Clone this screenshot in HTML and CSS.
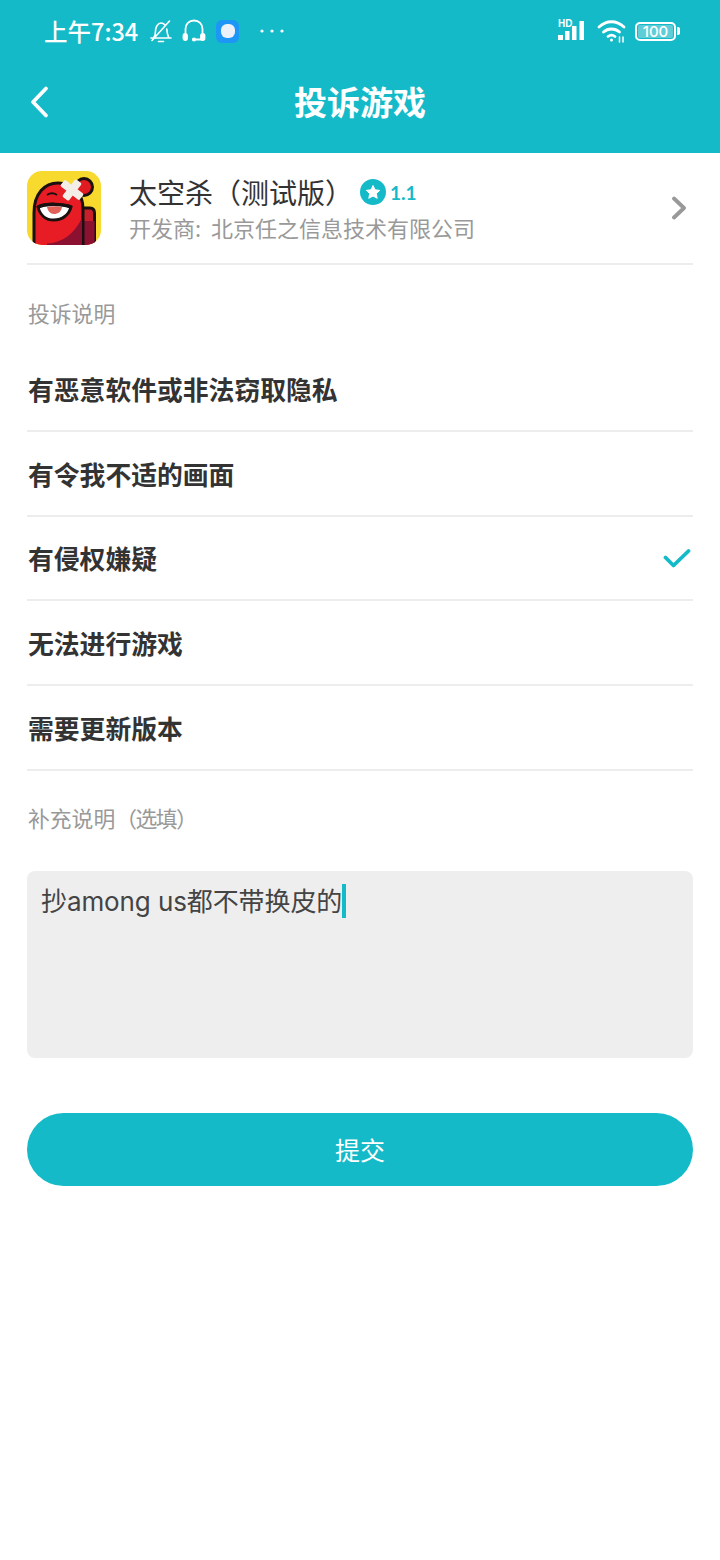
FILE: index.html
```html
<!DOCTYPE html>
<html lang="zh-CN">
<head>
  <meta charset="UTF-8" />
  <title>投诉游戏</title>
  <link rel="stylesheet" href="styles.css">
</head>
<body>
  <div class="top-bar">
    <div class="status-bar">
      <div class="status-left">
        <span class="clock">上午7:34</span>
        <svg class="st-icon" width="24" height="24" viewBox="0 0 24 24" fill="none" stroke="#fff" stroke-width="1.6" stroke-linecap="round" stroke-linejoin="round">
          <path d="M2 19h20M4.500 19c1.800-2 2-4 2-7 0-4 2.500-8 5.500-8 1.600 0 3 .7 4 2M17.800 10c.3 3.500.5 6.500 2.400 9M3 21.500 20.500 2M9.500 22.500h5"/>
        </svg>
        <svg class="st-icon" width="24" height="24" viewBox="0 0 24 24" fill="none" stroke="#fff" stroke-width="1.800" stroke-linecap="round">
          <path d="M3.500 16V10c0-5 3.500-8.500 8.500-8.500s8.500 3.500 8.500 8.500v6"/>
          <path d="M20.500 20.500h-7" />
          <rect x="1.500" y="15" width="3.500" height="6" rx="1.700" fill="#fff"/>
          <rect x="19" y="15" width="3.500" height="6" rx="1.700" fill="#fff"/>
          <circle cx="12" cy="20.500" r="1.200" fill="#fff"/>
        </svg>
        <span class="app-dot"><span class="app-dot-in"></span></span>
        <svg class="more-dots" width="24" height="6" viewBox="0 0 24 6" fill="#fff">
          <circle cx="2" cy="3" r="1.600"/>
          <circle cx="12" cy="3" r="1.600"/>
          <circle cx="22" cy="3" r="1.600"/>
        </svg>
      </div>
      <div class="status-right">
        <span class="signal">
          <span class="hd">HD</span>
          <svg width="28" height="20" viewBox="0 0 28 20" fill="#fff">
            <rect x="0" y="14" width="5" height="5"/>
            <rect x="7" y="10" width="4.500" height="9"/>
            <rect x="14" y="5" width="4.500" height="14"/>
            <rect x="21.500" y="0" width="4.500" height="19"/>
          </svg>
        </span>
        <svg class="wifi" width="30" height="24" viewBox="0 0 30 24" fill="none" stroke="#fff" stroke-width="2.800" stroke-linecap="round">
          <path d="M2 8C9.500 1 19.500 1 27 8"/>
          <path d="M6.500 13c4.500-4 11.500-4 16 0"/>
          <path d="M11 17.500c2-1.500 5-1.500 7 0"/>
          <circle cx="14.500" cy="21" r="1.500" fill="#fff" stroke="none"/>
          <path d="M22.500 18v5M26 18v5" stroke-width="1.500"/>
        </svg>
        <span class="battery"><span class="batt-body">100</span><span class="batt-tip"></span></span>
      </div>
    </div>
    <div class="nav-bar">
      <svg class="back" width="22" height="34" viewBox="0 0 22 34" fill="none" stroke="#fff" stroke-width="3.800" stroke-linecap="round" stroke-linejoin="round">
        <path d="M17 3.500 4 17l13 13.500"/>
      </svg>
      <h1>投诉游戏</h1>
    </div>
  </div>

  <div class="content">
    <div class="game-row">
      <svg class="game-icon" width="74" height="74" viewBox="0 0 74 74">
        <clipPath id="iconClip"><rect width="74" height="74" rx="15"/></clipPath>
        <g clip-path="url(#iconClip)">
          <rect width="74" height="74" fill="#F8D92E"/>
          <g stroke="#1a1010" stroke-width="3">
            <circle cx="57" cy="16" r="8.500" fill="#E01B22"/>
            <path d="M54 37h9c3 0 4.500 2 4.500 5v34H54z" fill="#C8202A"/>
            <path d="M54 50h13.500v26H54z" fill="#8C1030" stroke="none"/>
            <path d="M7 78V42C7 22 18 12 31 12c15 0 25 10 25 26v40z" fill="#E81C24"/>
            <path d="M20 72.500C35 72 47 63 54.500 48v26H20z" fill="#8C1030" stroke="none"/>
            <path d="M11 36c9-4 25-3 33 0-2 8-9 13-17 13-8 0-14-5-16-13z" fill="#fff"/>
            <path d="M20 36c5-1 11-1 15 0-1 5-4 7-8 7-4 0-6-3-7-7z" fill="#E2605A" stroke="none"/>
            <path d="M11 36c9-4 25-3 33 0" fill="none" stroke-width="3.500"/>
            <path d="M20 24c3-2 7-2 10 0" fill="none" stroke-width="2"/>
          </g>
          <g transform="rotate(38 45 19)" fill="#F3EEE8">
            <rect x="33" y="15" width="24" height="8" rx="1.500"/>
            <rect x="41" y="8" width="8" height="22" rx="1.500"/>
          </g>
        </g>
      </svg>
      <div class="game-info">
        <div class="game-title">
          <span class="game-name">太空杀（测试版）</span>
          <svg width="26" height="26" viewBox="0 0 26 26">
            <circle cx="13" cy="13" r="13" fill="#15BAC9"/>
            <path d="M13 6.500l2 4.300 4.700.6-3.400 3.200.9 4.700-4.200-2.300-4.200 2.300.9-4.700-3.400-3.200 4.700-.6z" fill="#fff" stroke="#fff" stroke-width="1" stroke-linejoin="round"/>
          </svg>
          <span class="score">1.1</span>
        </div>
        <div class="game-dev">开发商: 北京任之信息技术有限公司</div>
      </div>
      <svg class="chevron" width="16" height="24" viewBox="0 0 16 24" fill="none" stroke="#999" stroke-width="3.800" stroke-linecap="round" stroke-linejoin="round">
        <path d="M3 2.500 13 12 3 21.500"/>
      </svg>
    </div>

    <div class="section-label first">投诉说明</div>
    <ul class="reasons">
      <li>有恶意软件或非法窃取隐私</li>
      <li>有令我不适的画面</li>
      <li>有侵权嫌疑
        <svg class="tick" width="28" height="21" viewBox="0 0 28 21" fill="none" stroke="#15BAC9" stroke-width="3.800" stroke-linecap="round" stroke-linejoin="round">
          <path d="M2.500 9.500 10.500 17.500 25.500 3"/>
        </svg>
      </li>
      <li>无法进行游戏</li>
      <li>需要更新版本</li>
    </ul>

    <div class="section-label second">补充说明<span class="optional">（选填）</span></div>
    <div class="note-box"><span class="note-text">抄among us都不带换皮的</span><span class="caret"></span></div>

    <button class="submit">提交</button>
  </div>
</body>
</html>
```

FILE: styles.css
```css
* { margin: 0; padding: 0; box-sizing: border-box; }
body {
  width: 720px;
  min-height: 1560px;
  background: #fff;
  color: #333;
  font-family: "Noto Sans CJK SC", "Noto Sans", sans-serif;
}

/* top bar */
.top-bar {
  height: 153px;
  background: #15BAC9;
  color: #fff;
}
.status-bar {
  height: 64px;
  padding: 0 40px 0 44px;
  display: flex;
  justify-content: space-between;
  align-items: center;
}
.status-left, .status-right {
  display: flex;
  align-items: center;
}
.clock {
  font-size: 23.500px;
  font-weight: 500;
  line-height: 28px;
  margin-top: -2px;
  margin-right: 11px;
}
.st-icon { margin-right: 9px; margin-top: -2px; }
.app-dot {
  width: 23px;
  height: 23px;
  margin-top: -2px;
  margin-left: 1px;
  border-radius: 6px;
  background: #1E96F5;
  display: flex;
  align-items: center;
  justify-content: center;
}
.app-dot-in {
  width: 14px;
  height: 14px;
  border-radius: 6px;
  background: #EDF2FA;
}
.more-dots {
  margin-left: 21px;
  margin-top: -2px;
}
.signal {
  position: relative;
  display: flex;
  align-items: flex-end;
  width: 30px;
  height: 20px;
  margin-right: 9px;
  margin-top: -2px;
}
.signal svg { display: block; }
.hd {
  position: absolute;
  left: 0;
  top: -2px;
  font-size: 10px;
  font-weight: 700;
  line-height: 10px;
  font-family: "Liberation Sans", sans-serif;
}
.wifi { margin-top: -2px; }
.battery {
  display: flex;
  align-items: center;
  margin-left: 8px;
  margin-top: -2px;
}
.batt-body {
  width: 41px;
  height: 19px;
  border: 2px solid #fff;
  border-radius: 5px;
  box-shadow: inset 0 0 0 1px #15BAC9;
  background: #5fcdd8;
  font-size: 15px;
  font-weight: 500;
  line-height: 15px;
  text-align: center;
  font-family: "Inter", sans-serif;
}
.batt-tip {
  width: 3px;
  height: 8px;
  margin-left: 1px;
  background: #fff;
  border-radius: 0 2px 2px 0;
}
.nav-bar {
  position: relative;
  height: 77px;
  display: flex;
  align-items: center;
  justify-content: center;
}
.back {
  position: absolute;
  left: 29px;
  top: 21px;
}
.nav-bar h1 {
  font-size: 33px;
  font-weight: 700;
  line-height: 44px;
  margin-top: -3px;
}

/* content */
.content { padding: 0 27px; }
.game-row {
  height: 112px;
  padding-top: 18px;
  display: flex;
  align-items: flex-start;
  border-bottom: 2px solid #EDEDED;
}
.game-icon { flex: none; }
.game-info {
  margin-left: 28px;
  flex: 1;
}
.game-title {
  display: flex;
  align-items: center;
  height: 40px;
  margin-top: 1px;
}
.game-name {
  font-size: 28px;
  line-height: 40px;
  width: 231px;
  white-space: nowrap;
}
.score {
  font-size: 19px;
  font-weight: 700;
  color: #15BAC9;
  margin-left: 4px;
  font-family: "Lato", sans-serif;
}
.game-dev {
  font-size: 22px;
  line-height: 30px;
  color: #999;
  word-spacing: 5px;
}
.chevron {
  margin-top: 25px;
  margin-right: 6px;
}
.section-label {
  font-size: 21.800px;
  line-height: 30px;
  color: #999;
  padding-left: 1px;
}
.optional { letter-spacing: -1.500px; }
.section-label.first { margin-top: 33px; }
.section-label.second { margin-top: 32px; }
.reasons { list-style: none; margin-top: 19px; }
.reasons li {
  height: 84.750px;
  display: flex;
  align-items: center;
  justify-content: space-between;
  padding: 0 3px 0 1px;
  font-size: 25.800px;
  font-weight: 700;
  color: #333;
  border-bottom: 2px solid #EDEDED;
}
.tick { margin-top: 1px; margin-right: -1px; }
.note-box {
  height: 187px;
  margin-top: 38px;
  padding: 11px 14px;
  background: #EEEEEE;
  border-radius: 8px;
  display: flex;
  align-items: flex-start;
}
.note-text {
  font-family: "Inter", "Noto Sans CJK SC", sans-serif;
  font-size: 26px;
  line-height: 40px;
  letter-spacing: -0.100px;
  color: #444;
}
.caret {
  width: 4px;
  height: 34px;
  background: #15BAC9;
  margin-top: 2px;
}
.submit {
  display: block;
  width: 100%;
  height: 73px;
  margin-top: 55px;
  border: 0;
  border-radius: 37px;
  background: #15BAC9;
  color: #fff;
  font-family: inherit;
  font-size: 25px;
}
```
